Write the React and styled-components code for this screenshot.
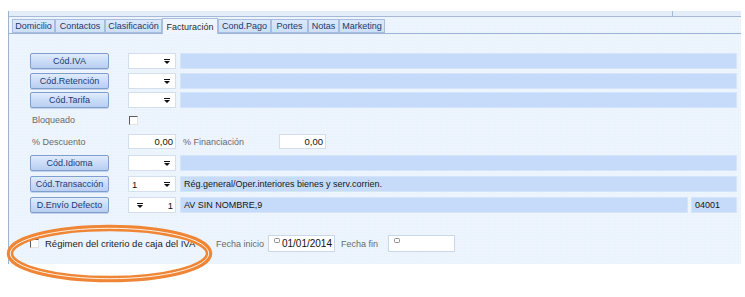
import React from 'react';
import styled, { createGlobalStyle } from 'styled-components';

const Global = createGlobalStyle`
  html, body { margin: 0; padding: 0; background: #fff; }
  body { font-family: "Liberation Sans", Arial, sans-serif; }
  * { box-sizing: border-box; }
`;

const Page = styled.div`
  position: relative;
  width: 745px;
  height: 297px;
  overflow: hidden;
  background: #fff;
  padding-top: 11px;
`;

const Window = styled.div`
  margin-left: 8px;
  width: 733px;
  height: 253px;
  background-color: #ebf3fd;
  background-image: radial-gradient(rgba(255,255,255,0.45) 0.6px, transparent 0.7px);
  background-size: 3px 3px;
  border-left: 1px solid #9fb3d1;
  display: flex;
  flex-direction: column;
`;

const TopBand = styled.div`
  height: 6px;
  display: flex;
  background: #e3edf9;
  border-bottom: 1px solid #a7b9d5;
`;

const TopCell = styled.div`
  width: ${p => p.$w}px;
  border-right: ${p => (p.$divider ? '1px solid #a7b9d5' : 'none')};
`;

const TabStrip = styled.div`
  height: 17px;
  display: flex;
  align-items: flex-end;
  padding-left: 3px;
  border-bottom: 1px solid #9db3d6;
`;

const Tab = styled.div`
  width: ${p => p.$w}px;
  height: ${p => (p.$active ? 16 : 14)}px;
  margin-bottom: ${p => (p.$active ? -1 : 0)}px;
  display: flex;
  align-items: center;
  justify-content: center;
  font-size: 9px;
  color: ${p => (p.$active ? '#2b2b2b' : '#22386a')};
  background: ${p => (p.$active ? '#eef5fe' : 'linear-gradient(#dbe8fa, #cddff7)')};
  border: 1px solid ${p => (p.$active ? '#a9bfe0' : '#a6bde0')};
  border-bottom: ${p => (p.$active ? 'none' : '1px solid #a6bde0')};
  white-space: nowrap;
`;

const Content = styled.div`
  display: flex;
  flex-direction: column;
  padding-left: 21px;
`;

const Row = styled.div`
  display: flex;
  align-items: center;
  height: ${p => p.$h}px;
  margin-top: ${p => p.$mt}px;
`;

const CodeButton = styled.div`
  width: 79px;
  height: 16px;
  margin-right: 19px;
  display: flex;
  align-items: center;
  justify-content: center;
  font-size: 9px;
  color: #1d3a75;
  background: linear-gradient(#e1ecfc 0%, #cadcf7 50%, #b9cff1 100%);
  border: 1px solid #7f9dcd;
  border-radius: 2px;
  box-shadow: 0 1px 0 #c3d3ea;
  white-space: nowrap;
`;

const Label = styled.div`
  width: ${p => p.$w}px;
  padding-left: ${p => p.$pl || 0}px;
  font-size: 9px;
  color: #6a6a6a;
  white-space: nowrap;
`;

const WhiteBox = styled.div`
  width: ${p => p.$w}px;
  height: ${p => p.$h || 16}px;
  margin-right: ${p => p.$mr || 0}px;
  background: #fff;
  border: 1px solid #d3dfef;
  display: flex;
  align-items: center;
  justify-content: ${p => p.$justify || 'flex-start'};
  padding: 0 2px 0 3px;
  font-size: 9.5px;
  color: #111;
  position: relative;
`;

const Arrow = styled.svg`
  width: 6px;
  height: 5px;
  flex: none;
  margin-left: ${p => p.$ml || 0}px;
  margin-right: ${p => p.$mr || 0}px;
`;

const BlueField = styled.div`
  width: ${p => p.$w}px;
  height: 16px;
  margin-right: ${p => p.$mr || 0}px;
  background: #c6dbfa;
  border: 1px solid #d4e4fb;
  display: flex;
  align-items: center;
  padding-left: 3px;
  font-size: 9px;
  color: #161616;
  white-space: nowrap;
  overflow: hidden;
`;

const Check = styled.div`
  width: 9px;
  height: 9px;
  flex: none;
  background: #fff;
  border-top: 1px solid #5c5c5c;
  border-left: 1px solid #5c5c5c;
  border-right: 1px solid #e4e4e4;
  border-bottom: 1px solid #e4e4e4;
  margin-left: ${p => p.$ml || 0}px;
  margin-right: ${p => p.$mr || 0}px;
`;

const CheckGroup = styled.div`
  width: 186px;
  display: flex;
  align-items: center;
`;

const CheckText = styled.div`
  font-size: 9.5px;
  color: #1b1b1b;
  white-space: nowrap;
`;

const DateBox = styled.div`
  width: 67px;
  height: 17px;
  margin-right: ${p => p.$mr || 0}px;
  background: #fff;
  border: 1px solid #c9d7ec;
  position: relative;
  display: flex;
  align-items: center;
  justify-content: flex-end;
  padding-right: 2px;
  font-size: 10px;
  color: #111;
`;

const CalIcon = styled.svg`
  position: absolute;
  left: 5px;
  top: 2px;
  width: 6px;
  height: 5px;
`;

const Overlay = styled.svg`
  position: absolute;
  left: 0;
  top: 0;
  width: 745px;
  height: 297px;
  pointer-events: none;
`;

const DropArrow = (props) => (
  <Arrow viewBox="0 0 6 5" {...props}>
    <rect x="0" y="0" width="6" height="1" fill="#111" />
    <polygon points="0,2 6,2 3,5" fill="#111" />
  </Arrow>
);

const Cal = () => (
  <CalIcon viewBox="0 0 6 5">
    <rect x="0.5" y="0.5" width="5" height="4" rx="1" fill="none" stroke="#8a8a8a" strokeWidth="1" />
  </CalIcon>
);

const tabs = [
  ['Domicilio', 43],
  ['Contactos', 50],
  ['Clasificación', 57],
  ['Facturación', 56, true],
  ['Cond.Pago', 53],
  ['Portes', 37],
  ['Notas', 31],
  ['Marketing', 46],
];

const Combo = ({ value }) => (
  <WhiteBox $w={48} $mr={4} $justify="space-between">
    <span>{value || ''}</span>
    <DropArrow $mr={3} />
  </WhiteBox>
);

export default function App() {
  return (
    <>
      <Global />
      <Page>
        <Window>
          <TopBand>
            <TopCell $w={664} $divider />
            <TopCell $w={68} />
          </TopBand>
          <TabStrip>
            {tabs.map(([t, w, a]) => (
              <Tab key={t} $w={w} $active={a}>{t}</Tab>
            ))}
          </TabStrip>
          <Content>
            <Row $h={16} $mt={19}>
              <CodeButton>Cód.IVA</CodeButton>
              <Combo />
              <BlueField $w={557} />
            </Row>
            <Row $h={16} $mt={4}>
              <CodeButton>Cód.Retención</CodeButton>
              <Combo />
              <BlueField $w={557} />
            </Row>
            <Row $h={16} $mt={3}>
              <CodeButton>Cód.Tarifa</CodeButton>
              <Combo />
              <BlueField $w={557} />
            </Row>
            <Row $h={12} $mt={6}>
              <Label $w={99} $pl={2}>Bloqueado</Label>
              <Check />
            </Row>
            <Row $h={15} $mt={8}>
              <Label $w={98} $pl={2}>% Descuento</Label>
              <WhiteBox $w={48} $h={15} $mr={7} $justify="flex-end">0,00</WhiteBox>
              <Label $w={96}>% Financiación</Label>
              <WhiteBox $w={47} $h={15} $justify="flex-end">0,00</WhiteBox>
            </Row>
            <Row $h={16} $mt={6}>
              <CodeButton>Cód.Idioma</CodeButton>
              <Combo />
              <BlueField $w={557} />
            </Row>
            <Row $h={16} $mt={5}>
              <CodeButton>Cód.Transacción</CodeButton>
              <Combo value="1" />
              <BlueField $w={557}>Rég.general/Oper.interiores bienes y serv.corrien.</BlueField>
            </Row>
            <Row $h={16} $mt={5}>
              <CodeButton>D.Envío Defecto</CodeButton>
              <WhiteBox $w={48} $mr={4} $justify="space-between">
                <DropArrow $ml={5} />
                <span>1</span>
              </WhiteBox>
              <BlueField $w={508} $mr={3}>AV SIN NOMBRE,9</BlueField>
              <BlueField $w={46}>04001</BlueField>
            </Row>
            <Row $h={17} $mt={22}>
              <CheckGroup>
                <Check $mr={6} />
                <CheckText>Régimen del criterio de caja del IVA</CheckText>
              </CheckGroup>
              <Label $w={52}>Fecha inicio</Label>
              <DateBox $mr={6}>
                <Cal />
                01/01/2014
              </DateBox>
              <Label $w={47}>Fecha fin</Label>
              <DateBox>
                <Cal />
              </DateBox>
            </Row>
          </Content>
        </Window>
        <Overlay viewBox="0 0 745 297">
          <ellipse cx="109.5" cy="253.5" rx="99.5" ry="25.5" fill="none" stroke="#ef8636" strokeWidth="6.5" />
          <ellipse cx="109.5" cy="253.5" rx="99.2" ry="25.2" fill="none" stroke="#fff1e4" strokeWidth="1" />
        </Overlay>
      </Page>
    </>
  );
}
